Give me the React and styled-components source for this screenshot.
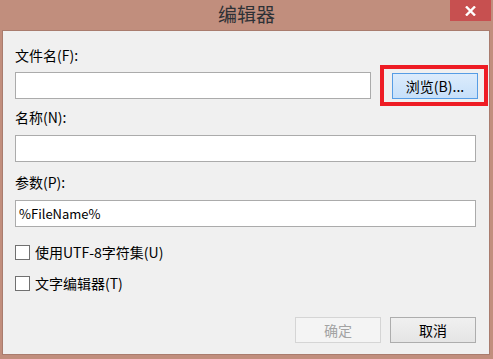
import React from "react";
import styled, { createGlobalStyle } from "styled-components";

const Global = createGlobalStyle`
  html, body { margin: 0; padding: 0; background: #c18e7d; }
  * { box-sizing: border-box; }
`;

const FONT = `"Noto Sans CJK SC", "Noto Sans", sans-serif`;

const Window = styled.div`
  width: 493px;
  height: 359px;
  background: #c18e7d;
  display: flex;
  flex-direction: column;
  padding: 0 3px 4px 2px;
  font-family: ${FONT};
`;

const TitleBar = styled.div`
  height: 30px;
  display: grid;
  grid-template-columns: 1fr auto 1fr;
  align-items: start;
  margin-right: -1px;
`;

const Title = styled.div`
  grid-column: 2;
  font-size: 19px;
  line-height: 27px;
  color: #2e3136;
`;

const CloseBtn = styled.div`
  grid-column: 3;
  justify-self: end;
  width: 41px;
  height: 21px;
  background: #c75050;
  display: flex;
  align-items: center;
  justify-content: center;
`;

const Content = styled.div`
  flex: 1;
  background: #f0f0f0;
  border: 1px solid #a97c6e;
  padding: 15px 12px 0 12px;
  display: flex;
  flex-direction: column;
`;

const Label = styled.div`
  font-size: 14px;
  line-height: 18px;
  height: 18px;
  color: #000;
  margin-top: ${(p) => p.$mt || 0}px;
`;

const Row = styled.div`
  display: flex;
  align-items: center;
  gap: 21px;
  margin-top: ${(p) => p.$mt || 0}px;
`;

const Input = styled.div`
  flex: ${(p) => (p.$w ? "none" : "1")};
  width: ${(p) => (p.$w ? p.$w + "px" : "auto")};
  height: 27px;
  background: #fff;
  border: 1px solid #ababab;
  font-size: 13px;
  line-height: 25px;
  padding-left: 3px;
  color: #000;
  margin-right: ${(p) => (p.$w ? 0 : 1)}px;
`;

const BrowseWrap = styled.div`
  position: relative;
  display: flex;
`;

const Highlight = styled.div`
  position: absolute;
  left: -12px;
  right: -10px;
  top: -8px;
  bottom: -7px;
  border: 4px solid #ee1c24;
  pointer-events: none;
`;

const Button = styled.div`
  width: 86px;
  height: 26px;
  display: flex;
  align-items: center;
  justify-content: center;
  font-size: 14px;
  border: 1px solid
    ${(p) => (p.$variant === "focus" ? "#569de5" : p.$variant === "disabled" ? "#d5d5d5" : "#adadad")};
  background: ${(p) =>
    p.$variant === "focus"
      ? "linear-gradient(#dcecfc, #c6e0fa)"
      : p.$variant === "disabled"
      ? "#f4f4f4"
      : "linear-gradient(#f0f0f0, #e5e5e5)"};
  color: ${(p) => (p.$variant === "disabled" ? "#a3a3a3" : "#000")};
`;

const CheckRow = styled.label`
  display: flex;
  align-items: center;
  gap: 5px;
  font-size: 14px;
  line-height: 18px;
  height: 18px;
  margin-top: ${(p) => p.$mt || 0}px;
`;

const Box = styled.span`
  width: 15px;
  height: 15px;
  border: 1px solid #707070;
  background: #fff;
  display: inline-block;
`;

const Footer = styled.div`
  display: flex;
  justify-content: flex-end;
  gap: 9px;
  margin-top: 25px;
  padding-right: 1px;
`;

export default function App() {
  return (
    <>
      <Global />
      <Window>
        <TitleBar>
          <Title>编辑器</Title>
          <CloseBtn>
            <svg width="11" height="10" viewBox="0 0 11 10">
              <path d="M1 0.5 L10 9.5 M10 0.5 L1 9.5" stroke="#fff" strokeWidth="2.4" />
            </svg>
          </CloseBtn>
        </TitleBar>
        <Content>
          <Label>文件名(F):</Label>
          <Row $mt={8}>
            <Input $w={356} />
            <BrowseWrap>
              <Button $variant="focus">浏览(B)...</Button>
              <Highlight />
            </BrowseWrap>
          </Row>
          <Label $mt={9}>名称(N):</Label>
          <Row $mt={9}>
            <Input />
          </Row>
          <Label $mt={11}>参数(P):</Label>
          <Row $mt={9}>
            <Input>%FileName%</Input>
          </Row>
          <CheckRow $mt={16}>
            <Box />
            使用UTF-8字符集(U)
          </CheckRow>
          <CheckRow $mt={13}>
            <Box />
            文字编辑器(T)
          </CheckRow>
          <Footer>
            <Button $variant="disabled">确定</Button>
            <Button>取消</Button>
          </Footer>
        </Content>
      </Window>
    </>
  );
}
